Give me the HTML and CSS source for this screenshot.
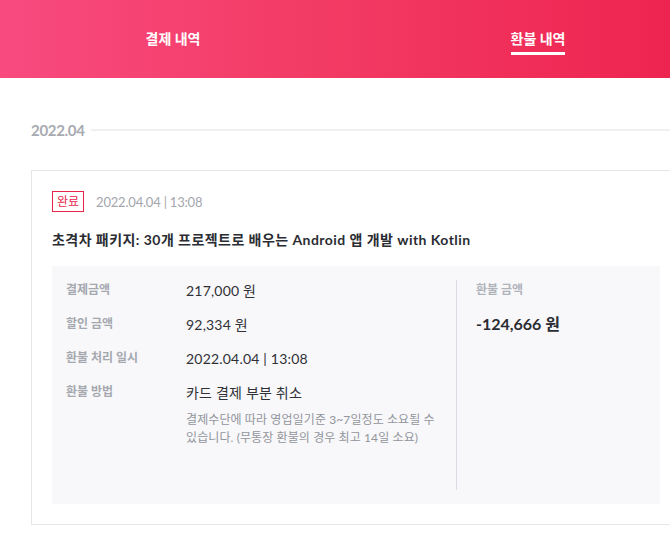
FILE: index.html
```html
<!DOCTYPE html>
<html lang="ko">
<head>
<meta charset="utf-8">
<title>환불 내역</title>
<link rel="stylesheet" href="styles.css">
</head>
<body>
<div class="page">
  <header class="tabs">
    <div class="tab"><span class="tab-label">결제 내역</span></div>
    <div class="tab"><span class="tab-label is-active">환불 내역</span></div>
  </header>
  <main class="content">
    <div class="month">
      <h2 class="month-title">2022.04</h2>
      <span class="month-line"></span>
    </div>
    <article class="card">
      <div class="card-head">
        <span class="badge">완료</span>
        <span class="card-date">2022.04.04 | 13:08</span>
      </div>
      <h3 class="card-title">초격차 패키지: 30개 프로젝트로 배우는 Android 앱 개발 with Kotlin</h3>
      <div class="detail">
        <div class="detail-left">
          <div class="rows">
            <span class="label">결제금액</span>
            <span class="value">217,000 원</span>
            <span class="label">할인 금액</span>
            <span class="value">92,334 원</span>
            <span class="label">환불 처리 일시</span>
            <span class="value">2022.04.04 | 13:08</span>
            <span class="label">환불 방법</span>
            <div class="value">
              카드 결제 부분 취소
              <p class="note">결제수단에 따라 영업일기준 3~7일정도 소요될 수<br>있습니다. (무통장 환불의 경우 최고 14일 소요)</p>
            </div>
          </div>
        </div>
        <div class="detail-right">
          <span class="label">환불 금액</span>
          <span class="amount">-124,666 원</span>
        </div>
      </div>
    </article>
  </main>
</div>
</body>
</html>
```

FILE: styles.css
```css
html, body {
  margin: 0;
  padding: 0;
  background: #ffffff;
}
body {
  font-family: Lato, "Noto Sans CJK KR", sans-serif;
  color: #2f3136;
  overflow: hidden;
}
.page {
  width: 670px;
  overflow: hidden;
}
.tabs {
  height: 78px;
  background: linear-gradient(90deg, #f84a7f 0%, #f23a63 50%, #ee2450 100%);
  display: grid;
  grid-template-columns: 346px 384px;
}
.tab {
  display: flex;
  justify-content: center;
  padding-top: 29px;
}
.tab-label {
  display: inline-block;
  height: 20px;
  line-height: 20px;
  font-size: 14px;
  font-weight: 700;
  color: #ffffff;
  padding-bottom: 3px;
  border-bottom: 3px solid transparent;
}
.tab-label.is-active {
  border-bottom-color: #ffffff;
}
.content {
  width: 650px;
  margin-left: 31px;
  padding-top: 42px;
}
.month {
  display: flex;
  align-items: center;
  gap: 6px;
  height: 20px;
}
.month-title {
  margin: 0;
  font-size: 15px;
  line-height: 20px;
  font-weight: 700;
  color: #a7aab1;
  letter-spacing: -0.3px;
}
.month-line {
  flex: 1;
  height: 2px;
  background: #f0f0f2;
}
.card {
  margin-top: 30px;
  border: 1px solid #e6e6e8;
  padding: 20px;
}
.card-head {
  display: flex;
  align-items: center;
  gap: 12px;
}
.badge {
  display: inline-block;
  height: 19px;
  line-height: 19px;
  padding: 0 4px;
  border: 1px solid #e8244c;
  color: #e8244c;
  font-size: 12px;
}
.card-date {
  font-size: 13px;
  color: #a3a6ad;
  letter-spacing: -0.2px;
}
.card-title {
  margin: 18px 0 0;
  font-size: 14px;
  line-height: 20px;
  font-weight: 700;
  color: #2b2d33;
  letter-spacing: 0.45px;
}
.detail {
  margin-top: 16px;
  background: #f8f8fa;
  padding: 14px;
  display: flex;
}
.detail-left {
  flex: 0 0 390px;
  border-right: 1px solid #dcdce4;
  padding-bottom: 43px;
}
.rows {
  display: grid;
  grid-template-columns: 120px 1fr;
  row-gap: 12px;
  align-items: start;
}
.label {
  font-size: 12px;
  line-height: 20px;
  font-weight: 700;
  color: #a5a8af;
}
.value {
  font-size: 14px;
  line-height: 22px;
  color: #2f3136;
  letter-spacing: 0.2px;
}
.note {
  margin: 7px 0 0;
  font-size: 12px;
  line-height: 18px;
  color: #92959c;
  letter-spacing: 0.1px;
}
.detail-right {
  padding-left: 19px;
  display: flex;
  flex-direction: column;
  align-items: flex-start;
}
.detail-right .label {
  color: #b0b3ba;
}
.amount {
  margin-top: 13px;
  font-size: 16px;
  line-height: 22px;
  font-weight: 700;
  color: #2b2d33;
}
```
